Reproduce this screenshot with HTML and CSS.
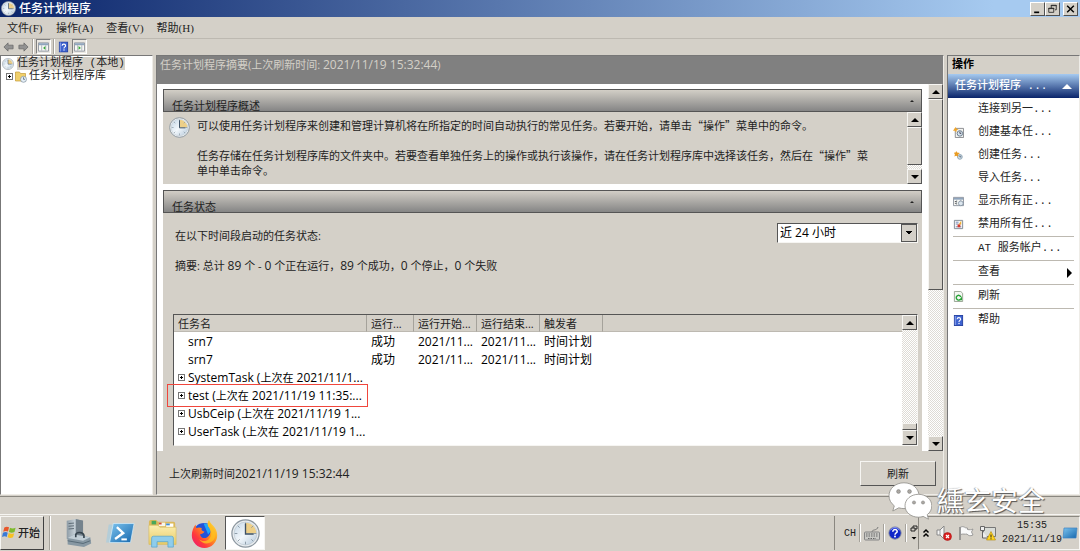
FILE: index.html
```html
<!DOCTYPE html>
<html lang="zh-CN">
<head>
    <meta charset="UTF-8">
    <meta name="viewport" content="width=device-width, initial-scale=1.0">
    <title>任务计划程序</title>
    <link rel="stylesheet" href="styles.css">
</head>
<body>

<svg class="sprite" aria-hidden="true">
    <defs>
        <linearGradient id="face" x1="0" y1="0" x2="1" y2="1">
            <stop offset="0" stop-color="#c3d6e6"/>
            <stop offset=".5" stop-color="#f2f7fb"/>
            <stop offset="1" stop-color="#b4c8da"/>
        </linearGradient>
        <linearGradient id="blue" x1="0" y1="0" x2="1" y2="1">
            <stop offset="0" stop-color="#7cc3ee"/>
            <stop offset="1" stop-color="#1667ad"/>
        </linearGradient>
        <linearGradient id="steel" x1="0" y1="0" x2="1" y2="0">
            <stop offset="0" stop-color="#8e9ca6"/>
            <stop offset=".5" stop-color="#c5d0d7"/>
            <stop offset="1" stop-color="#71808b"/>
        </linearGradient>
        <linearGradient id="paper" x1="0" y1="0" x2="0" y2="1">
            <stop offset="0" stop-color="#fbeeb0"/>
            <stop offset="1" stop-color="#e8cb67"/>
        </linearGradient>
        <linearGradient id="fire" x1="1" y1="0" x2="0" y2="1">
            <stop offset="0" stop-color="#fff04a"/>
            <stop offset=".4" stop-color="#ff9a1c"/>
            <stop offset=".7" stop-color="#ff3a3c"/>
            <stop offset="1" stop-color="#e6127f"/>
        </linearGradient>
    </defs>
    <symbol id="clock" viewBox="0 0 32 32">
        <circle cx="16" cy="16" r="15" fill="#e9edf0" stroke="#8b969f" stroke-width="1.4"/>
        <circle cx="16" cy="16" r="12.6" fill="url(#face)" stroke="#b2bec8" stroke-width=".6"/>
        <path d="M16 16V4a12 12 0 0 1 12 12z" fill="#edcf88"/>
        <path d="M16 4v3M16 25v3M4 16h3M25 16h3M7.5 7.5l2 2M24.500 7.500l-2 2M7.500 24.500l2-2M24.500 24.500l-2-2" stroke="#8795a1" stroke-width="1"/>
        <path d="M16 5v11.500h9" fill="none" stroke="#3d5166" stroke-width="1.500"/>
    </symbol>
    <symbol id="book" viewBox="0 0 10 12">
        <rect x=".5" y=".5" width="9" height="11" fill="#3e63d0" stroke="#2440a0"/>
        <path d="M1.500 1v10" stroke="#93a9ee"/>
        <path d="M3.500 4.500c0-2.200 3.800-2.200 3.800 0 0 1.500-1.800 1.300-1.800 3" fill="none" stroke="#fff" stroke-width="1.200"/>
        <rect x="4.900" y="8.600" width="1.300" height="1.300" fill="#fff"/>
    </symbol>
    <symbol id="panel" viewBox="0 0 12 12">
        <path d="M.5 1.500h11v9H.5z" fill="#f8f8f5" stroke="#8b929b"/>
        <path d="M1 2h10v2H1z" fill="#8fa5bd"/>
        <path d="M4 4v6M8.500 4v6" stroke="#aab2ba"/>
    </symbol>
</svg>

<header class="title-bar">
    <svg class="title-icon"><use href="#clock"/></svg>
    <h1>任务计划程序</h1>
    <div class="window-buttons">
        <button type="button" aria-label="最小化"><svg viewBox="0 0 12 12"><path d="M2 10h6" stroke="#000" stroke-width="2"/></svg></button>
        <button type="button" aria-label="还原"><svg viewBox="0 0 12 12"><path d="M4.500 5V1.500h6V7H9M4 2h7M1.500 5h6v5h-6zM1 5.500h7" fill="none" stroke="#222"/></svg></button>
        <button type="button" class="close" aria-label="关闭"><svg viewBox="0 0 12 12"><path d="M2 2l8 8M10 2l-8 8" stroke="#000" stroke-width="1.700"/></svg></button>
    </div>
</header>

<nav class="menu-bar">
    <button type="button">文件(F)</button>
    <button type="button">操作(A)</button>
    <button type="button">查看(V)</button>
    <button type="button">帮助(H)</button>
</nav>

<div class="tool-bar">
    <button type="button" aria-label="后退"><svg viewBox="0 0 12 12"><path d="M1 6l4.500-4.500V4H11v4H5.500v2.500z" fill="#929292" stroke="#666" stroke-width=".8"/></svg></button>
    <button type="button" aria-label="前进"><svg viewBox="0 0 12 12"><path d="M11 6L6.500 1.500V4H1v4h5.500v2.500z" fill="#929292" stroke="#666" stroke-width=".8"/></svg></button>
    <i class="divider"></i>
    <button type="button" class="pressed" aria-label="显示控制台树"><svg viewBox="0 0 12 12"><use href="#panel"/><path d="M8 5v4L5.500 7z" fill="#35a835"/></svg></button>
    <i class="divider"></i>
    <button type="button" aria-label="帮助"><svg viewBox="0 0 12 12"><use href="#book"/></svg></button>
    <button type="button" class="pressed" aria-label="显示操作窗格"><svg viewBox="0 0 12 12"><use href="#panel"/><path d="M5 5v4l2.500-2z" fill="#35a835"/></svg></button>
</div>

<main class="panes">
    <aside class="tree">
        <div class="node">
            <svg class="tree-icon"><use href="#clock"/></svg>
            <span class="selected">任务计划程序 (本地)</span>
        </div>
        <div class="node child">
            <i class="plus"></i>
            <svg class="tree-icon" viewBox="0 0 12 12"><path d="M.5 2V1h4l1 1.500h5V10H.5z" fill="#f0cf6a" stroke="#c39a36" stroke-width=".7"/><circle cx="8.500" cy="8.300" r="3" fill="#e4eef6" stroke="#7e8f9f" stroke-width=".7"/><path d="M8.500 6.300v2h1.500" fill="none" stroke="#44586c" stroke-width=".7"/></svg>
            <span>任务计划程序库</span>
        </div>
    </aside>

    <section class="summary">
        <h2 class="summary-title">任务计划程序摘要(上次刷新时间: <span class="num">2021/11/19 15:32:44</span>)</h2>
        <div class="summary-body">
            <div class="groups">
                <section class="group">
                    <h3 class="group-head">任务计划程序概述<i class="collapse"></i></h3>
                    <div class="overview">
                        <svg class="overview-icon"><use href="#clock"/></svg>
                        <div class="overview-text">
                            <p>可以使用任务计划程序来创建和管理计算机将在所指定的时间自动执行的常见任务。若要开始，请单击“操作”菜单中的命令。</p>
                            <p>任务存储在任务计划程序库的文件夹中。若要查看单独任务上的操作或执行该操作，请在任务计划程序库中选择该任务，然后在“操作”菜<br>单中单击命令。</p>
                        </div>
                        <div class="scroll">
                            <button type="button" class="up" aria-label="向上"></button>
                            <i class="thumb thumb-overview"></i>
                            <button type="button" class="down" aria-label="向下"></button>
                        </div>
                    </div>
                </section>

                <section class="group">
                    <h3 class="group-head">任务状态<i class="collapse"></i></h3>
                    <div class="status">
                        <div class="period">
                            <label for="period">在以下时间段启动的任务状态:</label>
                            <select id="period"><option>近 24 小时</option></select>
                        </div>
                        <p class="totals">摘要: 总计 <span class="num">89</span> 个 - <span class="num">0</span> 个正在运行，<span class="num">89</span> 个成功，<span class="num">0</span> 个停止，<span class="num">0</span> 个失败</p>
                        <div class="task-list">
                            <table>
                                <colgroup>
                                    <col class="col-name">
                                    <col class="col-result">
                                    <col class="col-time">
                                    <col class="col-time">
                                    <col class="col-time">
                                    <col>
                                </colgroup>
                                <thead>
                                    <tr><th>任务名</th><th>运行...</th><th>运行开始...</th><th>运行结束...</th><th>触发者</th><th></th></tr>
                                </thead>
                                <tbody>
                                    <tr><td class="run">srn7</td><td>成功</td><td>2021/11...</td><td>2021/11...</td><td>时间计划</td><td></td></tr>
                                    <tr><td class="run">srn7</td><td>成功</td><td>2021/11...</td><td>2021/11...</td><td>时间计划</td><td></td></tr>
                                    <tr><td colspan="6"><i class="plus"></i>SystemTask (<small>上次在</small> 2021/11/1...</td></tr>
                                    <tr><td colspan="6" class="marked"><i class="plus"></i>test (<small>上次在</small> 2021/11/19 11:35:...</td></tr>
                                    <tr><td colspan="6"><i class="plus"></i>UsbCeip (<small>上次在</small> 2021/11/19 1...</td></tr>
                                    <tr><td colspan="6"><i class="plus"></i>UserTask (<small>上次在</small> 2021/11/19 1...</td></tr>
                                </tbody>
                            </table>
                            <div class="scroll">
                                <button type="button" class="up" aria-label="向上"></button>
                                <i class="thumb thumb-list"></i>
                                <button type="button" class="down" aria-label="向下"></button>
                            </div>
                        </div>
                    </div>
                </section>
            </div>
            <div class="scroll">
                <button type="button" class="up" aria-label="向上"></button>
                <i class="thumb thumb-page"></i>
                <button type="button" class="down" aria-label="向下"></button>
            </div>
        </div>
        <footer class="summary-foot">
            <span>上次刷新时间<span class="num">2021/11/19 15:32:44</span></span>
            <button type="button" class="refresh">刷新</button>
        </footer>
    </section>

    <aside class="actions">
        <h2>操作</h2>
        <h3>任务计划程序 ...<i class="fold"></i></h3>
        <ul>
            <li><button type="button"><i class="icon"></i>连接到另一...</button></li>
            <li><button type="button"><svg class="icon" viewBox="0 0 12 12"><path d="M2.500 1.500h9v10h-9z" fill="#f3f3f0" stroke="#85888c"/><circle cx="7.500" cy="7" r="3" fill="#d8e4ee" stroke="#667788"/><path d="M7.500 5v2H9" fill="none" stroke="#445"/><path d="M3 0l.8 2L6 2.500 4 3.600 3.500 6 2.200 4 0 4l1.300-1.700z" fill="#f0a52a"/></svg>创建基本任...</button></li>
            <li><button type="button"><svg class="icon" viewBox="0 0 12 12"><circle cx="7.500" cy="7.500" r="2.600" fill="#cbe0ee" stroke="#8fa3b0"/><path d="M7.500 6v1.500H9" fill="none" stroke="#445" stroke-width=".8"/><path d="M3.500 1l1 1.800 3 .4-2 1.600.2 2.600-2.200-1.200L1.500 7l.6-2.200L1 3l1.800-.2z" fill="#e99c22"/></svg>创建任务...</button></li>
            <li><button type="button"><i class="icon"></i>导入任务...</button></li>
            <li><button type="button"><svg class="icon" viewBox="0 0 12 12"><use href="#panel"/><circle cx="8.500" cy="8" r="2.600" fill="#dce6ee" stroke="#778899" stroke-width=".8"/><path d="M2 6h2M2 8h2" stroke="#555"/></svg>显示所有正...</button></li>
            <li><button type="button"><svg class="icon" viewBox="0 0 12 12"><path d="M1.500 1.500h9v9h-9z" fill="#f7f7f7" stroke="#7d8791"/><path d="M3 3.500h3M3 5.500h3M3 8.500h6" stroke="#7186b8"/><path d="M9 2v4H6z" fill="#f0ae2e"/><rect x="5" y="6" width="3" height="3" fill="#d63a2f"/></svg>禁用所有任...</button></li>
            <li class="line"><button type="button"><i class="icon"></i>AT 服务帐户...</button></li>
            <li class="line"><button type="button"><i class="icon"></i>查看<i class="more"></i></button></li>
            <li class="line"><button type="button"><svg class="icon" viewBox="0 0 12 12"><path d="M1.500.5h7l2 2v9h-9z" fill="#f4f7f2" stroke="#93a08e"/><path d="M7.800 9.300A2.600 2.600 0 1 1 8.600 6.500" fill="none" stroke="#26a336" stroke-width="1.500"/><path d="M9.800 6v4H6.500z" fill="#26a336"/></svg>刷新</button></li>
            <li class="line"><button type="button"><svg class="icon" viewBox="0 0 12 12"><use href="#book"/></svg>帮助</button></li>
        </ul>
    </aside>
</main>

<div class="status-bar"></div>

<footer class="task-bar">
    <button type="button" class="start">
        <svg viewBox="0 0 16 16"><path d="M2.500 3.200C4.500 2 6 2.200 7.500 3L6.400 7.500C5 6.700 3.200 6.700 1.300 7.700z" fill="#e8562a"/><path d="M8.500 3.500c1.800 1 3.800 1 6 0l-1.200 4.500c-2 1-4 .9-5.900 0z" fill="#7fba2c"/><path d="M1 8.900c1.900-1 3.700-1 5.100-.2L5 13.200c-1.500-.8-3.200-.8-5 .2z" fill="#3a7ad6"/><path d="M7.100 9.100c1.900 1 3.900 1 5.900.1l-1.200 4.500c-2 .9-4 .9-5.800-.1z" fill="#f7c021"/></svg>
        开始
    </button>
    <i class="divider"></i>
    <div class="apps">
        <button type="button" aria-label="服务器管理器"><svg viewBox="0 0 32 32"><path d="M3 2l10-2 8 2v19L12 25 3 22z" fill="url(#steel)"/><path d="M13 0l8 2v19l-8 3z" fill="#75838d"/><path d="M5 5l6-.5M5 8l6-.5M5 11l6-.5" stroke="#56656f"/><path d="M4 21l7-4 18 3 1 7-8 4-18-3z" fill="#8798a3"/><path d="M4 21l7-4 18 3-8 4z" fill="#c1ced6"/><path d="M13 20v-3c1-3 8-3 9 1v3" fill="none" stroke="#35434d" stroke-width="1.800"/><path d="M4 24l17 3 8-3" fill="none" stroke="#536773"/></svg></button>
        <button type="button" aria-label="PowerShell"><svg viewBox="0 0 32 32"><path d="M3 6h24l-4 20H0z" fill="#9ecbe3" opacity=".6"/><path d="M8 5h23l-4 21H4z" fill="url(#blue)" stroke="#d7eefb" stroke-width=".8"/><path d="M12 9l7 6.500-9 6.500" fill="none" stroke="#fff" stroke-width="2.600"/><path d="M17 22.500h6" stroke="#fff" stroke-width="2.200"/></svg></button>
        <button type="button" aria-label="资源管理器"><svg viewBox="0 0 32 32"><path d="M1 3q0-2 2-2h6l2 2h17q2 0 2 2v22H1z" fill="#dcb95b"/><path d="M4 2h5v4H4z" fill="#48a85a"/><path d="M12 4h7v4h-7z" fill="#f6f6ef"/><path d="M12 4h3v2h-3z" fill="#d04f39"/><path d="M20 5h8v4h-8z" fill="#fff"/><path d="M20 5h4v2h-4z" fill="#3d8dd8"/><path d="M1 7h10l2 2h18v19H1z" fill="url(#paper)" stroke="#d5b75a" stroke-width=".6"/><path d="M4 31V21q0-2 2-2h20q2 0 2 2v10h-6v-6H10v6z" fill="#8fcdeb" stroke="#55a4cf" stroke-width=".8"/></svg></button>
        <button type="button" aria-label="Firefox"><svg viewBox="0 0 32 32"><circle cx="15.500" cy="17" r="12.500" fill="#2352d8"/><path d="M15 5c5-1 9 3 9 7l-4 5z" fill="#20a7f6"/><path d="M21 1c1 5 9 7 9 17a14 14 0 0 1-28 0C2 13 4 9 6 6l1 4c2-1 4-1 6 0-1 2 0 3 3 4-1 2-3 2-5 3 1 4 5 5 8 3 5-3 4-9 1-12-1-3 0-5 1-7z" fill="url(#fire)"/><path d="M20 8c4 4 5 10 1 14-3 3-8 3-11 0 4 8 17 6 18-4 0-6-5-9-7-17-1 2-2 4-1 7z" fill="#ffc11f" opacity=".75"/></svg></button>
        <button type="button" class="active" aria-label="任务计划程序"><svg><use href="#clock"/></svg></button>
    </div>
    <div class="language">
        <span>CH</span>
        <i class="divider"></i>
        <svg viewBox="0 0 16 16"><path d="M8 7c0-3 5-1 6-5" fill="none" stroke="#777"/><rect x=".5" y="7" width="15" height="8" rx="1" fill="#c8c8c4" stroke="#858585"/><path d="M2 9h12M2 11h12M4 13.500h8" stroke="#666" stroke-dasharray="1.500 1"/></svg>
        <i class="divider"></i>
        <svg class="help" viewBox="0 0 16 16"><circle cx="8" cy="8" r="7" fill="#1026c8" stroke="#7b829c"/><path d="M3 5a5.500 5.500 0 0 1 10 0" fill="none" stroke="#93a4ff"/><path d="M5.500 6.500C5.500 3 10.700 3.300 10.500 6.500 10.300 8 8 8 8 10" fill="none" stroke="#fff" stroke-width="1.700"/><circle cx="8" cy="12" r="1.100" fill="#fff"/></svg>
        <i class="divider"></i>
        <svg class="narrow" viewBox="0 0 8 16"><path d="M3 3V1h4v3H5M1 3h4v3H1z" fill="none" stroke="#222"/><path d="M1.500 12h5L4 14.500z" fill="#000"/></svg>
    </div>
    <div class="tray">
        <svg class="narrow" viewBox="0 0 8 16"><path d="M1.500 7.500L4 5l2.500 2.500M1.500 11.500L4 9l2.500 2.500" fill="none" stroke="#000" stroke-width="1.500"/></svg>
        <svg viewBox="0 0 16 16"><path d="M1 5h3l4-4v13l-4-4H1z" fill="#f6f6f6" stroke="#888"/><path d="M4 5v5" stroke="#999"/><circle cx="11.500" cy="11.500" r="4" fill="#d91e1e" stroke="#a30d0d" stroke-width=".5"/><path d="M10 10l3 3M13 10l-3 3" stroke="#fff" stroke-width="1.200"/></svg>
        <svg viewBox="0 0 16 16"><path d="M2 2v13" stroke="#777" stroke-width="1.300"/><path d="M2.500 2c4-1.500 4 1.500 7 1v1.500c2 .5 4 .2 5.500-.5l-1.500 3 1.500 3c-3 1.500-5 .5-6-1-2 .5-4-.5-6.500.5z" fill="#fafafa" stroke="#8b8b8b" stroke-width=".8"/></svg>
        <svg viewBox="0 0 16 16"><path d="M3.500 2.500h12v9h-12z" fill="#d9dcd8" stroke="#777"/><path d="M.5 1.500h4v4h-4zM2.500 6v7H8" fill="#eee" stroke="#666"/><path d="M11 6.500l4.500 8.500h-9z" fill="#ffd51f" stroke="#b38700" stroke-width=".6"/><path d="M11 9.500v3M11 13.300v1" stroke="#222"/></svg>
        <div class="time">15:35<br>2021/11/19</div>
        <svg viewBox="0 0 16 16"><path d="M2 3h13l-1 10H1z" fill="url(#blue)" stroke="#3e83c1" stroke-width=".7"/></svg>
    </div>
</footer>

<div class="watermark">
    <svg viewBox="0 0 44 38"><g fill="#fff" stroke="#8d8b87" stroke-width=".8"><path d="M16 .8C7.500.8 1 6.500 1 13.800c0 4 2 7.500 5.300 10L4.800 29l6-3.200c1.700.5 3.400.8 5.200.8 8.500 0 15-5.700 15-12.800S24.500.8 16 .8z"/><path d="M30.500 12.300C23 12.300 17 17.300 17 23.800s6 11.400 13.500 11.400c1.700 0 3.300-.3 4.800-.7l5.200 2.700-1.300-4.500c2.900-2.100 4.600-5.300 4.600-8.900 0-6.500-6-11.500-13.300-11.500z"/></g><g fill="#aaa7a1" stroke="#777" stroke-width=".5"><circle cx="10.500" cy="9.500" r="1.900"/><circle cx="21.500" cy="9.500" r="1.900"/><circle cx="26" cy="20.500" r="1.600"/><circle cx="35" cy="20.500" r="1.600"/></g></svg>
    <span>纁玄安全</span>
</div>

</body>
</html>
```
FILE: styles.css
```css
* {
    box-sizing: border-box;
}
body {
    display: flex;
    flex-direction: column;
    height: 100vh;
    margin: 0;
    overflow: hidden;
    background: #d4d0c8;
    color: #222;
    font-family: "Open Sans", "Noto Sans CJK SC", sans-serif;
    font-size: 11px;
    line-height: 15px;
}
h1, h2, h3, p, ul {
    margin: 0;
    padding: 0;
    font-size: inherit;
    font-weight: normal;
}
button, select {
    margin: 0;
    padding: 0;
    border: 0;
    border-radius: 0;
    background: none;
    color: inherit;
    font: inherit;
}
svg {
    display: block;
    flex: none;
}
small {
    font-size: 11px;
}
.sprite {
    position: absolute;
    width: 0;
    height: 0;
}
.num {
    font-size: 12px;
}
.divider {
    flex: none;
    width: 2px;
    border-left: 1px solid #a5a29b;
    border-right: 1px solid #fff;
}

/* title bar */
.title-bar {
    display: flex;
    flex: none;
    align-items: center;
    gap: 3px;
    height: 17px;
    padding: 0 2px 0 1px;
    background: linear-gradient(to right, #0a246a, #a6caf0 92%);
}
.title-icon {
    width: 15px;
    height: 15px;
}
.title-bar h1 {
    flex: 1;
    color: #fff;
    font-size: 12px;
    font-weight: 500;
}
.window-buttons {
    display: flex;
}
.window-buttons button {
    width: 15px;
    height: 14px;
    padding: 1px;
    background: #d4d0c8;
    border: 1px solid;
    border-color: #fff #505050 #505050 #fff;
}
.window-buttons .close {
    margin-left: 3px;
}
.window-buttons svg {
    width: 11px;
    height: 10px;
}

/* menu and tool bar */
.menu-bar {
    display: flex;
    flex: none;
    gap: 13px;
    height: 22px;
    padding: 1px 7px 0;
    border-bottom: 1px solid #bdb9b1;
    font-family: "Liberation Serif", "Noto Sans CJK SC", serif;
}
.menu-bar button {
    min-width: 36px;
    text-align: left;
    white-space: nowrap;
}
.tool-bar {
    display: flex;
    flex: none;
    gap: 2px;
    height: 16px;
    padding: 0 2px 1px;
}
.tool-bar button {
    padding: 1px;
}
.tool-bar svg {
    width: 11px;
    height: 12px;
}
.tool-bar .pressed {
    padding: 0 1px;
    background: #ebe8e2;
    border: 1px solid;
    border-color: #808080 #fff #fff #808080;
}

/* panes */
.panes {
    display: flex;
    flex: 1;
    gap: 3px;
    min-height: 0;
}
.tree, .summary, .actions {
    border: 1px solid;
    border-color: #777 #eeece7 #eeece7 #777;
}
.tree {
    flex: none;
    width: 153px;
    padding: 1px 0 0 1px;
    background: #fff;
    font-family: "Liberation Mono", "Noto Sans CJK SC", monospace;
}
.node {
    display: flex;
    align-items: center;
    gap: 3px;
    height: 13px;
    line-height: 13px;
    white-space: nowrap;
}
.node.child {
    gap: 2px;
    padding-left: 4px;
}
.tree-icon {
    width: 12px;
    height: 12px;
}
.selected {
    background: #d4d0c8;
}
.plus {
    display: inline-block;
    flex: none;
    width: 7px;
    height: 7px;
    border: 1px solid #777;
    background:
        linear-gradient(#000, #000) center / 3px 1px no-repeat,
        linear-gradient(#000, #000) center / 1px 3px no-repeat,
        #fff;
}

/* summary */
.summary {
    display: flex;
    flex: 1;
    flex-direction: column;
    min-width: 0;
}
.summary-title {
    flex: none;
    height: 28px;
    padding: 1px 3px;
    background: #808080;
    color: #d4d0c8;
    white-space: nowrap;
}
.summary-body {
    display: flex;
    flex: 1;
    gap: 6px;
    min-height: 0;
    padding-left: 6px;
    background: #fff;
}
.groups {
    display: flex;
    flex: 1;
    flex-direction: column;
    gap: 6px;
    min-width: 0;
    padding-top: 5px;
}
.group {
    background: #d4d0c8;
}
.group:last-child {
    flex: 1;
}
.group-head {
    display: flex;
    justify-content: space-between;
    height: 23px;
    padding: 8px 7px 0 8px;
    overflow: hidden;
    border: 1px solid #555;
    background: linear-gradient(#d2cec6, #858585);
}
.collapse {
    width: 4px;
    height: 3px;
    margin-top: 1px;
    border: 2px solid transparent;
    border-top: 0;
    border-bottom-color: #222;
}
.overview {
    display: flex;
    height: 72px;
}
.overview-icon {
    width: 21px;
    height: 21px;
    margin: 5px 7px 0 6px;
}
.overview-text {
    flex: 1;
    padding-top: 6px;
    font-family: "Noto Sans CJK SC", sans-serif;
    white-space: nowrap;
}
.overview-text p {
    margin-bottom: 15px;
}

/* scroll bars */
.scroll {
    display: flex;
    flex: none;
    flex-direction: column;
    width: 15px;
    background: repeating-conic-gradient(#fff 0 25%, #dedbd5 0 50%) 0 0 / 2px 2px;
}
.scroll button, .thumb {
    flex: none;
    background: #d4d0c8;
    border: 1px solid;
    border-color: #f6f5f2 #555 #555 #f6f5f2;
}
.scroll button {
    display: flex;
    align-items: center;
    justify-content: center;
    height: 15px;
}
.up::before, .down::before {
    content: "";
    border: 4px solid transparent;
}
.up::before {
    border-top: 0;
    border-bottom-color: #000;
}
.down::before {
    border-bottom: 0;
    border-top-color: #000;
}
.scroll .down {
    margin-top: auto;
}
.thumb-overview {
    height: 38px;
}
.thumb-page {
    height: 191px;
}
.thumb-list {
    height: 7px;
    margin-top: auto;
}
.scroll .thumb-list + .down {
    margin-top: 0;
}

/* task status */
.status {
    padding: 9px 4px 6px 10px;
}
.period {
    display: flex;
    align-items: center;
    justify-content: space-between;
    padding-left: 2px;
}
.period label {
    padding-top: 6px;
}
.period select {
    width: 141px;
    height: 20px;
    padding: 0 2px;
    appearance: none;
    border: 1px solid;
    border-color: #555 #f6f5f2 #f6f5f2 #555;
    background:
        linear-gradient(to bottom right, #000 50%, transparent 0) right 4px center / 4px 4px no-repeat,
        linear-gradient(to bottom left, #000 50%, transparent 0) right 8px center / 4px 4px no-repeat,
        linear-gradient(#d4d0c8, #d4d0c8) right 1px center / 14px 16px no-repeat,
        linear-gradient(#555, #555) right / 16px 100% no-repeat,
        #fff;
    color: #000;
    font-size: 12px;
}
.totals {
    padding: 15px 2px 41px;
}
.task-list {
    display: flex;
    align-items: flex-start;
    height: 132px;
    border: 1px solid;
    border-color: #555 #f6f5f2 #f6f5f2 #555;
    background: #fff;
}
.task-list .scroll {
    height: 100%;
}
.task-list table {
    flex: 1;
    width: 100%;
    border-collapse: separate;
    border-spacing: 0;
    table-layout: fixed;
}
.col-name {
    width: 193px;
}
.col-result {
    width: 47px;
}
.col-time {
    width: 63px;
}
.task-list th {
    height: 17px;
    padding: 0 4px;
    background: #d4d0c8;
    border-right: 1px solid #a5a29b;
    border-bottom: 1px solid #bdb9b1;
    font-weight: normal;
    text-align: left;
    white-space: nowrap;
}
.task-list th:last-child {
    border-right: 0;
}
.task-list td {
    height: 18px;
    padding: 0 4px;
    color: #000;
    font-size: 12px;
    white-space: nowrap;
}
.task-list .run {
    padding-left: 14px;
}
.task-list .plus {
    margin-right: 3px;
    vertical-align: 1px;
}
.task-list .marked {
    position: relative;
}
.marked::after {
    content: "";
    position: absolute;
    top: -2px;
    left: -7px;
    width: 199px;
    height: 21px;
    border: 1px solid #f0463c;
}
.summary-foot {
    display: flex;
    flex: none;
    align-items: center;
    justify-content: space-between;
    height: 43px;
    padding: 2px 7px 0 12px;
}
.refresh {
    width: 76px;
    height: 25px;
    border: 1px solid;
    border-color: #f6f5f2 #555 #555 #f6f5f2;
}

/* actions */
.actions {
    flex: none;
    width: 133px;
    background: #fff;
    font-family: "Liberation Mono", "Noto Sans CJK SC", monospace;
}
.actions h2 {
    height: 18px;
    padding: 2px 4px 0;
    background: #d4d0c8;
    color: #000;
    font-weight: bold;
}
.actions h3 {
    display: flex;
    align-items: center;
    justify-content: space-between;
    height: 24px;
    padding: 1px 7px 0;
    background: linear-gradient(#a6caf0, #0a246a);
    color: #fff;
    font-weight: 500;
    white-space: nowrap;
}
.fold {
    border: 5px solid transparent;
    border-top: 0;
    border-bottom-color: #fff;
}
.actions ul {
    padding: 0 5px;
    list-style: none;
}
.actions li button {
    display: flex;
    align-items: center;
    width: 100%;
    height: 23px;
    white-space: nowrap;
}
.line {
    border-top: 1px solid #bdb9b1;
}
.icon {
    width: 11px;
    height: 11px;
    margin-right: 14px;
}
.more {
    margin: 0 2px 0 auto;
    border: 5px solid transparent;
    border-right: 0;
    border-left-color: #000;
}

/* bottom bars */
.status-bar {
    flex: none;
    height: 18px;
    margin-top: 1px;
    border-top: 1px solid #8a8780;
}
.task-bar {
    display: flex;
    flex: none;
    height: 37px;
    padding: 1px 0;
    border-top: 1px solid #f6f5f2;
}
.start {
    display: flex;
    align-items: center;
    gap: 1px;
    width: 44px;
    margin-right: 5px;
    padding: 0 0 2px 1px;
    border: 1px solid;
    border-color: #f6f5f2 #404040 #404040 #f6f5f2;
    white-space: nowrap;
    font-weight: 500;
}
.start svg {
    width: 15px;
    height: 16px;
}
.apps {
    display: flex;
    flex: 1;
    padding-left: 6px;
}
.apps button {
    display: flex;
    align-items: center;
    justify-content: center;
    width: 42px;
}
.apps svg {
    width: 29px;
    height: 29px;
}
.apps .active {
    width: 40px;
    background: #fff;
    border: 1px solid;
    border-color: #555 #f6f5f2 #f6f5f2 #555;
}
.language, .tray {
    display: flex;
    align-items: center;
    font-family: "Liberation Mono", monospace;
    font-size: 10px;
}
.language {
    gap: 3px;
    padding-left: 9px;
    border-left: 1px solid #8a8780;
}
.language .divider {
    height: 18px;
}
.language svg, .tray svg {
    width: 16px;
    height: 16px;
}
.language .narrow, .tray .narrow {
    width: 8px;
}
.language .help {
    width: 14px;
}
.tray {
    gap: 6px;
    padding: 0 1px 0 3px;
    border: 1px solid;
    border-color: #8a8780 #f6f5f2 #f6f5f2 #8a8780;
}
.time {
    line-height: 14px;
    text-align: center;
}
.tray .time + svg {
    margin-left: -6px;
}

.watermark {
    position: absolute;
    right: 35px;
    bottom: 30px;
    display: flex;
    align-items: center;
    gap: 5px;
    color: #fff;
    font-size: 27px;
    line-height: 40px;
    text-shadow: 1px 1px 1px #555, -1px 0 1px #999;
}
.watermark svg {
    width: 44px;
    height: 38px;
}
```
